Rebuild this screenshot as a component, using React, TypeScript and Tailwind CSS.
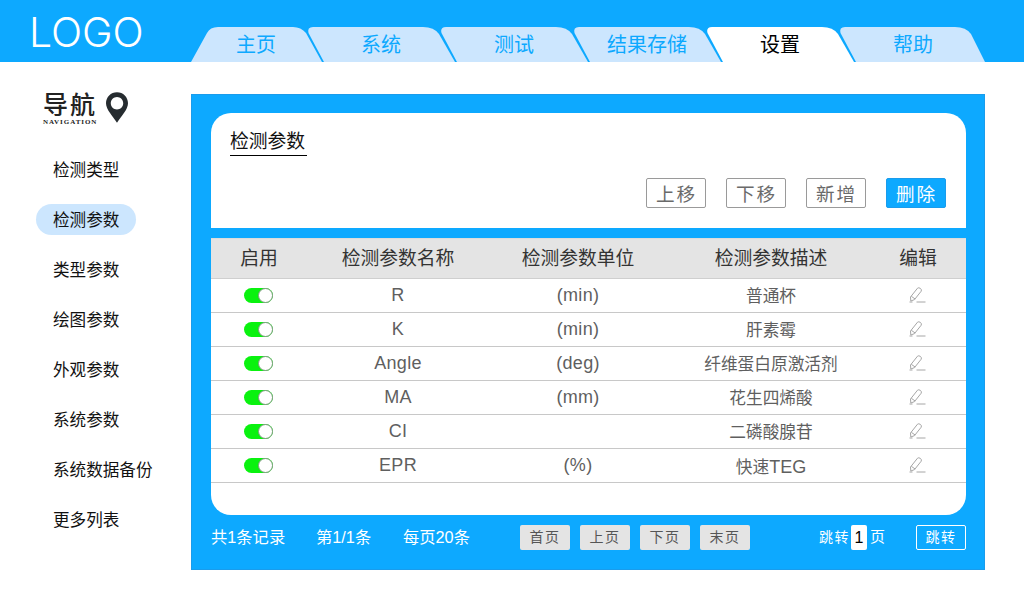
import React from "react";

const mid = "M0 35 L-15.5 6 Q-17 0 -11 0 L99 0 Q110 0 115 7 L131 35 Z";
const tabs = [
  { t: "主页", w: "w-[133px]", pr: "pr-[3px]", d: "M0 35 L16 6 Q19 0 27 0 L102 0 Q110 0 115 6 L131 35 Z" },
  { t: "系统", w: "w-[133px]", pr: "pr-[19px]", d: mid },
  { t: "测试", w: "w-[133px]", pr: "pr-[19px]", d: mid },
  { t: "结果存储", w: "w-[133px]", pr: "pr-[19px]", d: mid },
  { t: "设置", w: "w-[133px]", pr: "pr-[19px]", active: true, d: mid },
  { t: "帮助", w: "w-[129px]", pr: "pr-[15px]", d: "M0 35 L-15.5 6 Q-17 0 -11 0 L99 0 Q110 0 115 7 L129 35 Z" },
];

const nav = ["检测类型", "检测参数", "类型参数", "绘图参数", "外观参数", "系统参数", "系统数据备份", "更多列表"];

const rows = [
  ["R", "(min)", "普通杯", ""],
  ["K", "(min)", "肝素霉", ""],
  ["Angle", "(deg)", "纤维蛋白原激活剂", ""],
  ["MA", "(mm)", "花生四烯酸", ""],
  ["CI", "", "二磷酸腺苷", ""],
  ["EPR", "(%)", "快速", "TEG"],
];

const cols = "grid grid-cols-[96px_182px_178px_208px_86px] items-center justify-items-center";

function Toggle() {
  return (
    <div className="mr-[2px] mb-[1px] flex h-[15px] w-[29px] justify-end rounded-full bg-[#0af20f]">
      <div className="h-[15px] w-[15px] rounded-full border border-[#7f9a7f] bg-white" />
    </div>
  );
}

function EditIcon() {
  return (
    <svg className="mr-[2px] mb-[2px]" width="17" height="16" viewBox="0 0 17 16" fill="none" stroke="#a6a6a6" strokeWidth="1">
      <path d="M1.5 10 L8.5 1.2 Q9.6 0.2 11.4 1.4 Q13 2.8 12.2 4.2 L5.5 12.6 L1.8 14 Z" />
      <path d="M2.4 9.4 L6.2 12" />
      <path d="M7.5 15 L16.5 15" />
      <path d="M0.5 15 L3.5 15" />
    </svg>
  );
}

export default function App() {
  return (
    <div className="h-[600px] w-[1024px] overflow-hidden bg-white font-['Liberation_Sans','Noto_Sans_CJK_SC',sans-serif]">
      <header className="flex h-[62px] bg-[#0da9ff]">
        <div className="w-[191px] pl-[29px] pt-[9px] font-['Inter',sans-serif] text-[41px] leading-[46px] font-light text-white">LOGO</div>
        <div className="flex items-end">
          {tabs.map((x) => (
            <div key={x.t} className={`relative flex h-[35px] items-center justify-center ${x.w} ${x.pr}`}>
              <svg className="absolute top-0 left-0 overflow-visible" width="133" height="35" viewBox="0 0 133 35">
                <path d={x.d} fill={x.active ? "#ffffff" : "#cce6fe"} />
              </svg>
              <span className={`relative text-[20px] ${x.active ? "text-black" : "text-[#0da9ff]"}`}>{x.t}</span>
            </div>
          ))}
        </div>
      </header>
      <div className="flex">
        <aside className="w-[191px] shrink-0">
          <div className="flex items-start pt-[30px] pl-[43px]">
            <div className="w-[56px]">
              <div className="text-[25px] leading-[27px] font-medium tracking-[2px] text-[#222]">导航</div>
              <div className="mt-[-1px] font-['Liberation_Serif',serif] text-[7px] leading-[9px] font-bold tracking-[0.95px] whitespace-nowrap text-[#222]">NAVIGATION</div>
            </div>
            <svg className="ml-[7px]" width="22" height="31" viewBox="0 0 23 32">
              <path fillRule="evenodd" fill="#262c30" d="M11.5 0 C18 0 23 5 23 11.5 C23 18 16 25 11.5 32 C7 25 0 18 0 11.5 C0 5 5 0 11.5 0 Z M11.5 5 C7.9 5 5 7.9 5 11.5 C5 15.1 7.9 18 11.5 18 C15.1 18 18 15.1 18 11.5 C18 7.9 15.1 5 11.5 5 Z" />
            </svg>
          </div>
          <nav className="mt-[27px] flex flex-col items-start gap-[19px] pl-[36px]">
            {nav.map((n) => (
              <div key={n} className={`flex h-[31px] items-center pt-[3px] pl-[17px] text-[16.6px] whitespace-nowrap text-[#111] ${n === "检测参数" ? "w-[100px] rounded-full bg-[#cce6fe]" : ""}`}>
                {n}
              </div>
            ))}
          </nav>
        </aside>
        <main className="mt-[32px] flex h-[476px] w-[794px] flex-col border border-[#1a9cec] bg-[#0da9ff] px-[19px] pt-[18px]">
          <section className="h-[115px] w-[755px] rounded-t-[20px] bg-white px-[19px] pt-[16px]">
            <div className="inline-block border-b border-black pr-[2px] pb-[1px] text-[18.8px] leading-[25px] text-[#111]">检测参数</div>
            <div className="mt-[22px] flex justify-end gap-[20px] pr-[1px]">
              {["上移", "下移", "新增"].map((b) => (
                <button key={b} className="h-[30px] w-[60px] rounded-[2px] border border-[#9a9a9a] pt-[2px] pl-[1px] text-[18.6px] tracking-[2px] text-[#6a6a6a]">{b}</button>
              ))}
              <button className="h-[30px] w-[60px] rounded-[2px] border border-[#1a9cec] bg-[#0da9ff] pt-[2px] pl-[1px] text-[18.6px] tracking-[2px] text-white">删除</button>
            </div>
          </section>
          <section className="mt-[10px] h-[277px] w-[755px] rounded-b-[20px] bg-white">
            <div className={`${cols} h-[41px] border-y border-y-[#cfcfcf] border-t-[#dcdcdc] bg-[#e4e4e4] pt-[2px] text-[18.8px] text-[#333]`}>
              <div>启用</div>
              <div>检测参数名称</div>
              <div>检测参数单位</div>
              <div>检测参数描述</div>
              <div>编辑</div>
            </div>
            {rows.map((r) => (
              <div key={r[0]} className={`${cols} h-[34px] border-b border-[#c8c8c8] text-[#5f5f5f]`}>
                <Toggle />
                <div className="text-[18px] tracking-[0.3px]">{r[0]}</div>
                <div className="text-[18px] tracking-[0.3px]">{r[1]}</div>
                <div className="pt-[3px] text-[16.7px]">
                  {r[2]}
                  {r[3] && <span className="text-[18px]">{r[3]}</span>}
                </div>
                <EditIcon />
              </div>
            ))}
          </section>
          <footer className="mt-[10px] flex h-[25px] w-[755px] items-center text-white">
            <div className="w-[105px] text-[16.3px]">共1条记录</div>
            <div className="w-[87px] text-[16.3px]">第1/1条</div>
            <div className="w-[117px] text-[16.3px]">每页20条</div>
            <div className="flex gap-[10px]">
              {["首页", "上页", "下页", "末页"].map((b) => (
                <button key={b} className="h-[25px] w-[50px] rounded-[2px] bg-[#e4e4e4] text-[14px] tracking-[1.5px] text-[#555]">{b}</button>
              ))}
            </div>
            <div className="ml-[69px] text-[14px] tracking-[1.5px]">跳转</div>
            <div className="ml-[1px] flex h-[25px] w-[16px] items-center justify-center rounded-[2px] bg-white text-[16px] text-black">1</div>
            <div className="ml-[3px] text-[15px]">页</div>
            <button className="ml-auto h-[25px] w-[50px] rounded-[2px] border border-white text-[14px] tracking-[1.5px]">跳转</button>
          </footer>
        </main>
      </div>
    </div>
  );
}
